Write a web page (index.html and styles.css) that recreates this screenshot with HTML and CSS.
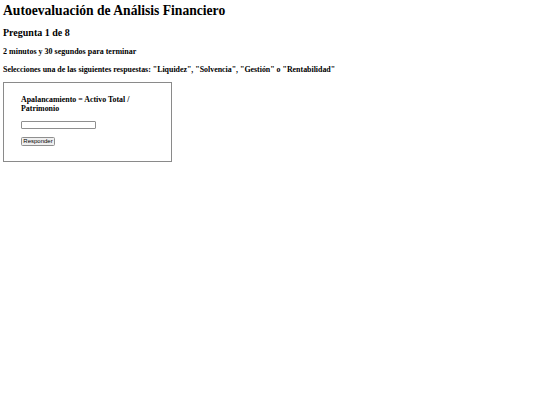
FILE: index.html
```html
<!DOCTYPE html>
<html lang="es">
<head>
<meta charset="utf-8">
<title>Autoevaluación de Análisis Financiero</title>
<link rel="stylesheet" href="styles.css">
</head>
<body>
<h1 class="title">Autoevaluación de Análisis Financiero</h1>
<h2 class="question-count">Pregunta 1 de 8</h2>
<p class="timer">2 minutos y 30 segundos para terminar</p>
<p class="instructions">Selecciones una de las siguientes respuestas: "Liquidez", "Solvencia", "Gestión" o "Rentabilidad"</p>
<form class="quiz-box" onsubmit="return false;">
  <p class="question">Apalancamiento = Activo Total / Patrimonio</p>
  <input class="answer" type="text">
  <button class="submit" type="submit">Responder</button>
</form>
</body>
</html>
```

FILE: styles.css
```css
html, body {
  background: #ffffff;
}
body {
  margin: 0;
  padding: 0 3px;
  font-family: "Liberation Serif", "Times New Roman", serif;
  color: #000000;
}
.title {
  font-size: 13.6px;
  line-height: 16px;
  font-weight: bold;
  margin: 3.4px 0 0;
}
.question-count {
  font-size: 10px;
  line-height: 12px;
  font-weight: bold;
  margin: 7.2px 0 0;
}
.timer {
  font-size: 8px;
  line-height: 9px;
  font-weight: bold;
  margin: 8.5px 0 0;
}
.instructions {
  font-size: 7.9px;
  line-height: 9px;
  font-weight: bold;
  margin: 8.6px 0 0;
}
.quiz-box {
  box-sizing: border-box;
  width: 169px;
  height: 80px;
  margin: 8px 0 0;
  padding: 12.5px 17px 0;
  border: 1px solid #8a8a8a;
  display: flex;
  flex-direction: column;
  align-items: flex-start;
}
.question {
  font-size: 7.9px;
  line-height: 9px;
  font-weight: bold;
  margin: 0;
}
.answer {
  box-sizing: border-box;
  width: 75px;
  height: 8.5px;
  margin: 7.5px 0 0;
  padding: 0;
  border: 1px solid #8f8f8f;
  border-radius: 1px;
  background: #ffffff;
}
.submit {
  box-sizing: border-box;
  height: 9px;
  width: 34px;
  margin: 7.5px 0 0;
  padding: 0;
  font-family: "Liberation Sans", Arial, sans-serif;
  font-size: 6px;
  line-height: 7px;
  color: #000000;
  background: #efefef;
  border: 1px solid #8f8f8f;
  border-radius: 1.5px;
}
```
